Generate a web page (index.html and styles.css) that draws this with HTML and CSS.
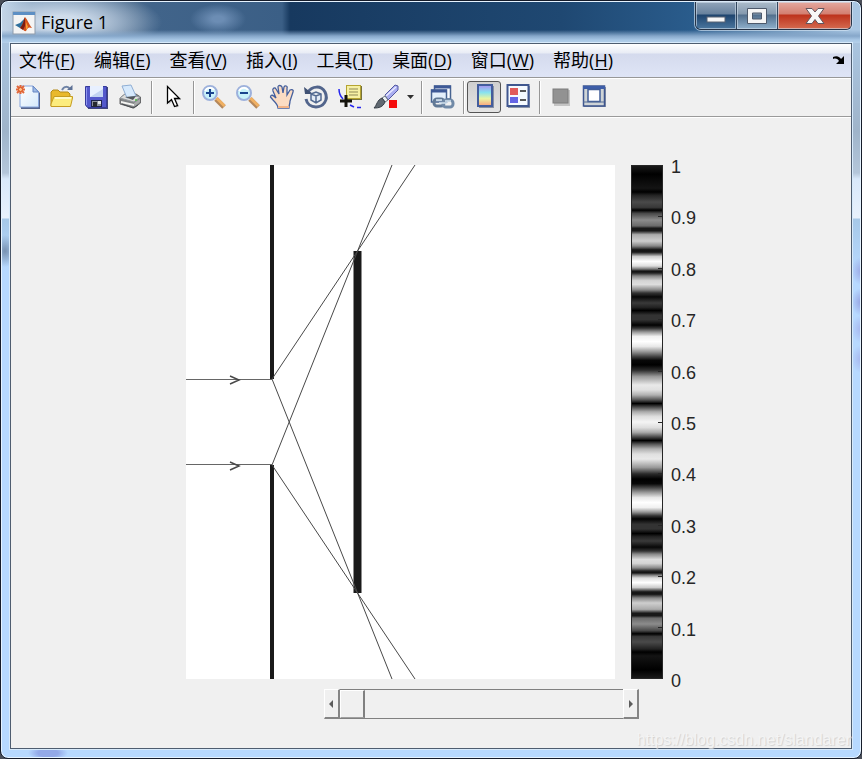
FILE: index.html
```html
<!DOCTYPE html>
<html lang="zh-CN">
<head>
<meta charset="utf-8">
<title>Figure 1</title>
<link rel="stylesheet" href="styles.css">
</head>
<body>
<main class="window">
  <header class="titlebar">
    <svg class="app-icon" viewBox="0 0 24 24" aria-hidden="true">
      <rect x="1" y="1" width="22" height="22" fill="#f4f4f4" stroke="#8e9bab"/>
      <rect x="1" y="1" width="22" height="3" fill="#5d8fc4"/>
      <path d="M3 14 8 12 13 7 12 14 8 17Z" fill="#2f6f9c"/>
      <path d="M13 6C15 8 17 13 20 17 17 16 16 16 14 20 12 21 11 17 8 17 11 14 12 8 13 6Z" fill="#d5521c"/>
      <path d="M8 17C11 14 12 9 13 6L13 15 11 19Z" fill="#7c1d12"/>
      <path d="M14 11 16 16 14 19Z" fill="#f6a034"/>
    </svg>
    <h1 class="title">Figure 1</h1>
    <div class="controls">
      <button class="control minimize" aria-label="最小化"><svg viewBox="0 0 20 18"><rect x="1" y="10" width="18" height="5" fill="#f7f7f7" stroke="#596273"/></svg></button>
      <button class="control maximize" aria-label="最大化"><svg viewBox="0 0 20 18"><path d="M.5 1.500H19.500V16.500H.5ZM5.500 6V12H14.500V6Z" fill="#f5f5f5" fill-rule="evenodd" stroke="#4d596b"/></svg></button>
      <button class="control close" aria-label="关闭"><svg viewBox="0 0 20 18"><path d="M1 1.500H7L10 5 13 1.500H19L13.500 9 19 16.500H13L10 12.500 7 16.500H1L6.500 9Z" fill="#f8f8f8" stroke="#62555c"/></svg></button>
    </div>
  </header>

  <section class="client">
    <nav class="menubar">
      <button class="menu">文件(<u>F</u>)</button>
      <button class="menu">编辑(<u>E</u>)</button>
      <button class="menu">查看(<u>V</u>)</button>
      <button class="menu">插入(<u>I</u>)</button>
      <button class="menu">工具(<u>T</u>)</button>
      <button class="menu">桌面(<u>D</u>)</button>
      <button class="menu">窗口(<u>W</u>)</button>
      <button class="menu">帮助(<u>H</u>)</button>
      <button class="dock" aria-label="停靠"><svg viewBox="0 0 12 10"><path d="M0 2C4 0 7 2 8 4L11 1V9H3L6 6C5 4 3 3 0 4Z" fill="#000"/></svg></button>
    </nav>

    <div class="toolbar">
      <button class="tool" aria-label="新建">
        <svg viewBox="0 0 24 24">
          <defs><linearGradient id="page" x1="0" y1="0" x2="1" y2="1"><stop offset="0" stop-color="#fff"/><stop offset="1" stop-color="#d5e9fb"/></linearGradient></defs>
          <path d="M5 2H18L24 8V24H5Z" fill="#56658c"/>
          <path d="M4 1H17L22.500 6.500V22H4Z" fill="url(#page)" stroke="#86a5dd"/>
          <path d="M17 1V7H22.500Z" fill="#9fbbe6" stroke="#6787c4"/>
          <path d="M4.500 0V9M0 4.500H9M1 1 8 8M8 1 1 8" stroke="#e2673a" stroke-width="2"/>
          <circle cx="4.500" cy="4.500" r="2" fill="#ffc28a" stroke="#dd5825"/>
        </svg>
      </button>
      <button class="tool" aria-label="打开">
        <svg viewBox="0 0 24 24">
          <path d="M1 21V7L3 5H8L10 7H18L20 9V21Z" fill="#e9b92c" stroke="#b48b19"/>
          <path d="M12 5C14 1 18 1 20 4" fill="none" stroke="#6f83a5" stroke-width="2"/>
          <path d="M17 5H22.500V0Z" fill="#5d7195"/>
          <path d="M1 21.500V19L4 11.500H22.500V13L20.500 21.500Z" fill="#fcec7d" stroke="#c69c20"/>
          <path d="M5 13H21" stroke="#fffac6" stroke-width="2"/>
        </svg>
      </button>
      <button class="tool" aria-label="保存">
        <svg viewBox="0 0 24 24">
          <path d="M3 2H24V24H4Z" fill="#41457c"/>
          <path d="M1.500 1.500H22.500V22.500H3.500L1.500 20Z" fill="#5358cb" stroke="#373c9c"/>
          <path d="M2.500 2.500V20" stroke="#9196f0"/>
          <rect x="6" y="1" width="13" height="11" fill="#e8f0ff"/>
          <path d="M6 12 19 4V12Z" fill="#c2d3f2"/>
          <rect x="7" y="15" width="11" height="7" fill="#20244d"/>
          <rect x="8" y="16" width="9" height="5" fill="#8d919c"/>
          <rect x="9" y="17" width="4" height="5" fill="#27282f"/>
          <rect x="14" y="16" width="3" height="3" fill="#e4e6ea"/>
        </svg>
      </button>
      <button class="tool" aria-label="打印">
        <svg viewBox="0 0 24 24">
          <path d="M2 13 7 9H18L22.500 12V18L16 23 2 19Z" fill="#808385" stroke="#68696b"/>
          <path d="M2 13 7 9 22 12 16 17Z" fill="#dcdcda" stroke="#94999e"/>
          <path d="M4 1 13 0 18 11 9 13Z" fill="#d6e9fc" stroke="#8faed4"/>
          <path d="M7 12 18 11 15 15Z" fill="#53585d"/>
          <path d="M3 16 16 19V21L3 18Z" fill="#f4f4f2"/>
          <path d="M16 18 22 14V17L16 22Z" fill="#a8aaaa"/>
          <path d="M4 19 15 23 20 20" fill="none" stroke="#494c50"/>
          <circle cx="18" cy="15" r="1" fill="#4fc244"/>
        </svg>
      </button>
      <span class="divider"></span>
      <button class="tool" aria-label="编辑绘图">
        <svg viewBox="0 0 24 24"><path d="M9 2.500V19L13 15.500 16 22.500 19 21.500 16 14.500H21Z" fill="#8a8a8a" opacity=".45"/><path d="M7.500 1.500V18L11.500 14.500 14.500 21.500 17.500 20.500 14.500 13.500H19.500Z" fill="#fff" stroke="#000" stroke-width="1.300"/></svg>
      </button>
      <span class="divider"></span>
      <button class="tool" aria-label="放大">
        <svg viewBox="0 0 24 24"><path d="M14 14 22 22" stroke="#b5875a" stroke-width="5"/><path d="M14.500 13 22.500 21" stroke="#f0b062" stroke-width="3"/><circle cx="8" cy="8" r="7" fill="#c8f2fa" stroke="#9db1dc" stroke-width="2"/><path d="M3 6C5 2 10 2 12 5" fill="none" stroke="#fff" stroke-width="2"/><path d="M8 4V12M4 8H12" stroke="#19448e" stroke-width="2"/></svg>
      </button>
      <button class="tool" aria-label="缩小">
        <svg viewBox="0 0 24 24"><path d="M14 14 22 22" stroke="#b5875a" stroke-width="5"/><path d="M14.500 13 22.500 21" stroke="#f0b062" stroke-width="3"/><circle cx="8" cy="8" r="7" fill="#c8f2fa" stroke="#9db1dc" stroke-width="2"/><path d="M3 6C5 2 10 2 12 5" fill="none" stroke="#fff" stroke-width="2"/><path d="M4 8H12" stroke="#19448e" stroke-width="2"/></svg>
      </button>
      <button class="tool" aria-label="平移">
        <svg viewBox="0 0 24 24"><path d="M8 23C8 20 6 18 3 15L0.500 12C1 9 3 10 6 13L3 6C2 3 5 2 6 4L9 9 8 2C8 0 11 0 12 2L13 8 14 2C15 0 18 1 17 3L17 10 20 5C22 4 24 5 23 7L20 16C20 19 19 20 19 23Z" fill="#fbdcc3" stroke="#445f9d" stroke-width="1.300"/><path d="M8 22H19" stroke="#f2b488" stroke-width="2"/></svg>
      </button>
      <button class="tool" aria-label="三维旋转">
        <svg viewBox="0 0 24 24"><path d="M4 7C8 1 17 0 21 7 25 15 19 22 12 22 7 22 3 19 2 14" fill="none" stroke="#52658c" stroke-width="3"/><path d="M0 2 9 9H1Z" fill="#405173"/><path d="M7 9 12 7 17 9V15L12 18 7 15ZM7 9 12 11 17 9M12 11V18" fill="#e4ecf6" stroke="#536a91" stroke-width="1.500"/></svg>
      </button>
      <button class="tool" aria-label="数据游标">
        <svg viewBox="0 0 24 24"><rect x="9" y="1" width="15" height="14" fill="#77723b"/><rect x="8.500" y="0.500" width="14" height="13" fill="#f6f0a2" stroke="#b5a431"/><path d="M11 4H20M11 7H20M11 10H20" stroke="#8f8956"/><path d="M1 4Q1 10 5 14M12 20 16 22M19 22.500H23" fill="none" stroke="#2525ef" stroke-width="1.500"/><path d="M8 10V22M2 16H14" stroke="#15130c" stroke-width="3"/></svg>
      </button>
      <button class="tool" aria-label="刷亮">
        <svg viewBox="0 0 24 24"><path d="M13 10 23 0 26 1V5L16 15Z" fill="#a8acf0" stroke="#5459a1"/><path d="M14 11 24 2" stroke="#e8eaff" stroke-width="1.500"/><path d="M10 13 13 11 16 15 13 17Z" fill="#edf2f4" stroke="#68747e"/><path d="M10 13 13 17C11 22 7 23 2 23 5 20 5 15 10 13Z" fill="#606871" stroke="#373f48"/><rect x="17" y="15" width="8" height="8" fill="#f50c0c"/></svg>
      </button>
      <button class="arrow" aria-label="刷亮选项"><svg viewBox="0 0 8 4"><path d="M0 0H7L3.500 4Z" fill="#303030"/></svg></button>
      <span class="divider"></span>
      <button class="tool" aria-label="链接绘图">
        <svg viewBox="0 0 24 24"><rect x="4.500" y="1" width="16" height="13" fill="#f8fbff" stroke="#486491" stroke-width="1.500"/><path d="M4 2H21" stroke="#3e5996" stroke-width="3"/><rect x="1.500" y="5" width="15" height="12" fill="#e3effb" stroke="#486491" stroke-width="1.500"/><path d="M1 6H17" stroke="#3e5996" stroke-width="3"/><rect x="4" y="14" width="10" height="7" rx="3" fill="none" stroke="#617996" stroke-width="3"/><rect x="13" y="15" width="10" height="7" rx="3" fill="none" stroke="#718aa7" stroke-width="3"/><path d="M6 15H12M15 16H21M9 18H17" stroke="#d4e4ef" stroke-width="1.500"/></svg>
      </button>
      <span class="divider"></span>
      <button class="tool pressed" aria-label="插入颜色栏" aria-pressed="true">
        <svg viewBox="0 0 24 24"><defs><linearGradient id="spectrum" x1="0" y1="0" x2="0" y2="1"><stop stop-color="#a98df0"/><stop offset=".35" stop-color="#86e2f0"/><stop offset=".65" stop-color="#eaf5a2"/><stop offset="1" stop-color="#fba17d"/></linearGradient></defs><rect x="7" y="1" width="15" height="22" fill="#8790a3"/><rect x="6" y="0" width="14" height="21" fill="url(#spectrum)" stroke="#435d9d" stroke-width="2"/></svg>
      </button>
      <button class="tool" aria-label="插入图例">
        <svg viewBox="0 0 24 24"><rect x="2" y="1" width="22" height="22" fill="#8d96a9"/><rect x="1.500" y="0" width="21" height="21" fill="#f5faff" stroke="#40578f" stroke-width="2"/><rect x="4" y="3" width="8" height="7" fill="#e15b5b"/><rect x="4" y="12" width="8" height="6" fill="#6464e5"/><path d="M14 6H20M14 15H20" stroke="#222" stroke-width="1.500"/></svg>
      </button>
      <span class="divider"></span>
      <button class="tool" aria-label="隐藏绘图工具" disabled>
        <svg viewBox="0 0 24 24"><rect x="6" y="5" width="16" height="16" fill="#c4c4c4"/><rect x="5" y="4" width="15" height="14" fill="#929292" stroke="#7d7d7d"/></svg>
      </button>
      <button class="tool" aria-label="显示绘图工具">
        <svg viewBox="0 0 24 24"><rect x="2" y="2" width="22" height="20" fill="#8992a5"/><rect x="1.500" y="1" width="21" height="20" fill="#cfd4d6" stroke="#3d558e" stroke-width="1.500"/><path d="M1 2.500H23" stroke="#3d5da8" stroke-width="3"/><rect x="6" y="4.500" width="12" height="12" fill="#fff" stroke="#405c98" stroke-width="1.500"/><path d="M1 17H22" stroke="#536a96"/></svg>
      </button>
    </div>

    <div class="figure">
      <svg class="axes" viewBox="0 0 429 514" preserveAspectRatio="none" role="img" aria-label="双缝衍射光路">
        <rect width="429" height="514" fill="#fff"/>
        <path d="M86 0V214M86 300V514" stroke="#1a1a1a" stroke-width="4"/>
        <path d="M171.500 86V428" stroke="#1a1a1a" stroke-width="8"/>
        <g fill="none" stroke="#484848" stroke-width="1">
          <path d="M0 214.500H86M0 299.500H86" stroke="#666"/>
          <path d="M86 214 229 0M86 300 206 0M86 214 206 514M86 300 229 514"/>
          <path d="M44 211 53 215 44 219M44 297 53 301 44 305" stroke-width="1.500"/>
        </g>
      </svg>
      <svg class="colorbar" viewBox="0 0 32 514" preserveAspectRatio="none" aria-hidden="true">
        <defs>
          <linearGradient id="fringes" gradientUnits="userSpaceOnUse" x1="0" y1="0" x2="0" y2="257" spreadMethod="reflect">
            <stop offset="0" stop-color="#1c1c1c"/><stop offset=".035" stop-color="#000"/><stop offset=".09" stop-color="#141414"/><stop offset=".105" stop-color="#000"/>
            <stop offset=".117" stop-color="#222"/><stop offset=".144" stop-color="#4a4a4a"/><stop offset=".165" stop-color="#383838"/><stop offset=".176" stop-color="#000"/>
            <stop offset=".188" stop-color="#484848"/><stop offset=".214" stop-color="#8c8c8c"/><stop offset=".237" stop-color="#6a6a6a"/><stop offset=".246" stop-color="#181818"/><stop offset=".256" stop-color="#181818"/>
            <stop offset=".271" stop-color="#aaa"/><stop offset=".296" stop-color="#cecece"/><stop offset=".315" stop-color="#888"/><stop offset=".33" stop-color="#141414"/><stop offset=".339" stop-color="#181818"/>
            <stop offset=".356" stop-color="#ccc"/><stop offset=".375" stop-color="#fff"/><stop offset=".393" stop-color="#ddd"/><stop offset=".405" stop-color="#777"/><stop offset=".413" stop-color="#111"/><stop offset=".42" stop-color="#222"/>
            <stop offset=".432" stop-color="#888"/><stop offset=".45" stop-color="#d4d4d4"/><stop offset=".465" stop-color="#ddd"/><stop offset=".486" stop-color="#888"/><stop offset=".498" stop-color="#333"/><stop offset=".513" stop-color="#080808"/>
            <stop offset=".537" stop-color="#3a3a3a"/><stop offset=".554" stop-color="#222"/><stop offset=".566" stop-color="#000"/><stop offset=".584" stop-color="#333"/><stop offset=".602" stop-color="#333"/><stop offset=".623" stop-color="#020202"/>
            <stop offset=".635" stop-color="#333"/><stop offset=".65" stop-color="#999"/><stop offset=".667" stop-color="#f0f0f0"/><stop offset=".687" stop-color="#fff"/><stop offset=".706" stop-color="#e8e8e8"/><stop offset=".726" stop-color="#999"/>
            <stop offset=".745" stop-color="#444"/><stop offset=".76" stop-color="#080808"/><stop offset=".778" stop-color="#000"/><stop offset=".798" stop-color="#2a2a2a"/><stop offset=".823" stop-color="#999"/><stop offset=".856" stop-color="#e9e9e9"/>
            <stop offset=".875" stop-color="#e0e0e0"/><stop offset=".895" stop-color="#b0b0b0"/><stop offset=".914" stop-color="#555"/><stop offset=".928" stop-color="#000"/><stop offset=".944" stop-color="#555"/><stop offset=".96" stop-color="#aaa"/><stop offset=".978" stop-color="#ddd"/><stop offset="1" stop-color="#f4f4f4"/>
          </linearGradient>
        </defs>
        <rect x=".5" y=".5" width="31" height="513" fill="url(#fringes)" stroke="#262626"/>
        <path d="M27 51.500h4M27 103.500h4M27 154.500h4M27 206.500h4M27 257.500h4M27 308.500h4M27 360.500h4M27 411.500h4M27 462.500h4" stroke="#262626"/>
      </svg>
      <ol class="ticks">
        <li>1</li><li>0.9</li><li>0.8</li><li>0.7</li><li>0.6</li><li>0.5</li><li>0.4</li><li>0.3</li><li>0.2</li><li>0.1</li><li>0</li>
      </ol>
      <div class="slider">
        <button class="step" aria-label="减小"><svg viewBox="0 0 4 8"><path d="M4 0V8L0 4Z" fill="#5c5c5c"/></svg></button>
        <input class="range" type="range" min="0" max="100" value="0" aria-label="距离">
        <button class="step" aria-label="增大"><svg viewBox="0 0 4 8"><path d="M0 0V8L4 4Z" fill="#5c5c5c"/></svg></button>
      </div>
      <span class="watermark">https://blog.csdn.net/slandarer</span>
    </div>
  </section>
</main>
</body>
</html>
```
FILE: styles.css
```css
* {
  box-sizing: border-box;
}

body {
  margin: 0;
  background: #4a4e58;
  font-family: "Open Sans", "Noto Sans CJK SC", sans-serif;
}

button {
  margin: 0;
  padding: 0;
  border: 0;
  background: none;
  color: #000;
  font: inherit;
}

svg {
  display: block;
  overflow: visible;
}

.window {
  display: flex;
  flex-direction: column;
  min-height: 100vh;
  padding: 0 8px 8px;
  border: 1px solid #161c2a;
  border-radius: 8px;
  box-shadow: inset 0 0 0 1px #e6f3ff;
  background:
    radial-gradient(ellipse 20px 8px at 47px calc(100% - 5px), #93a9e8 50%, transparent),
    radial-gradient(ellipse 10px 14px at 100% 270px, #9ba9e5, transparent),
    radial-gradient(ellipse 10px 14px at 100% 301px, #96a3e2, transparent),
    radial-gradient(ellipse 10px 14px at 100% 328px, #a6b6ee, transparent),
    radial-gradient(ellipse 10px 14px at 100% 358px, #a6b6ee, transparent),
    radial-gradient(ellipse 12px 16px at 4px 250px, #7892b2, transparent),
    linear-gradient(#a9c4df 44px, #9fb4ca 130px, #b4c6da 172px, #d8e8fa 178px, #e8f1fc 217px, #a6c8e8 218px, #b7d9ff 270px);
}

/* Title bar */
.titlebar {
  display: flex;
  align-items: flex-start;
  height: 41px;
  margin: 1px -7px 0;
  padding-left: 9px;
  border-radius: 6px 6px 0 0;
  background:
    linear-gradient(transparent 28px, #86a7ca 34px, #a9c8e6 38px, #b5d0ea),
    radial-gradient(ellipse 100px 32px at 60px 20px, #cfdceb 20%, #c0d0e2aa 55%, transparent),
    radial-gradient(ellipse 28px 15px at 216px 17px, #6c8db4 20%, transparent),
    linear-gradient(90deg, #c7daee 0, #7f9dbc 30px, #4d6d8f 130px, #41648a 150px, #3b5f86 280px, #17395f 288px, #1f4872 560px, #2a5c8c 690px, #a9c6e2 850px);
}

.app-icon {
  width: 24px;
  height: 24px;
  margin: 9px 5px 0 1px;
}

.title {
  flex: 1;
  margin: 8px 0 0;
  font-size: 18px;
  font-weight: 400;
  line-height: 24px;
}

.controls {
  display: flex;
  margin-right: 8px;
  border: 1px solid #273447;
  border-top: 0;
  border-radius: 0 0 6px 6px;
  overflow: hidden;
  box-shadow: 0 0 0 1px #d4e4f3aa;
}

.control {
  display: grid;
  place-items: center;
  width: 41px;
  height: 27px;
  border-right: 1px solid #31465e;
  box-shadow: inset 0 0 0 1px #d2dfec99;
  background: linear-gradient(#91a5ba, #67819d 12px, #1e446e 13px, #4b779f);
}

.maximize {
  background: linear-gradient(#acbccb, #8499ae 12px, #526f8d 13px, #8fb0cc);
}

.close {
  width: 73px;
  border-right: 0;
  background: linear-gradient(#e4aaa0, #d37e70 12px, #bd321c 13px, #d56b50);
}

.control svg {
  width: 20px;
  height: 18px;
}

/* Client area */
.client {
  display: flex;
  flex: 1;
  flex-direction: column;
  margin: 0 1px 1px;
  border: 1px solid #4e5d70;
  outline: 1px solid #d7eafb;
  background: #f0f0f0;
}

.menubar {
  display: flex;
  align-items: center;
  gap: 19px;
  height: 34px;
  padding: 0 6px 2px 8px;
  border-bottom: 1px solid #989898;
  background: linear-gradient(#fff, #e8ecf5 9px, #d4daed 10px, #dfe5f6);
}

.menu {
  font-size: 18px;
  line-height: 24px;
  white-space: nowrap;
}

.menu u {
  text-decoration-thickness: 1px;
  text-underline-offset: 2px;
}

.dock {
  margin-left: auto;
}

.dock svg {
  width: 12px;
  height: 10px;
}

.toolbar {
  display: flex;
  align-items: center;
  height: 39px;
  border-bottom: 1px solid #9a9a9a;
  box-shadow: inset 0 1px #fff, 0 1px #fff;
}

.tool {
  display: grid;
  place-items: center;
  width: 34px;
  height: 32px;
}

.tool svg {
  width: 24px;
  height: 24px;
}

.pressed {
  border: 1px solid #555;
  border-radius: 3px;
  background: linear-gradient(#cfcfcf, #e4e4e4);
}

.arrow {
  display: grid;
  place-items: center;
  width: 16px;
  height: 32px;
  padding-left: 4px;
}

.arrow svg {
  width: 8px;
  height: 4px;
}

.divider {
  width: 8px;
  height: 33px;
  background: linear-gradient(90deg, transparent 4px, #969696 4px, #969696 5px, #fff 5px, #fff 6px, transparent 6px);
}

/* Plot, colour scale and slider */
.figure {
  display: grid;
  flex: 1;
  grid-template-columns: 175fr 429fr 16fr 32fr 188fr;
  grid-template-rows: 48fr 514fr 10px 30px 29px;
}

.axes {
  grid-area: 2 / 2;
  width: 100%;
  height: 100%;
  overflow: hidden;
}

.colorbar {
  grid-area: 2 / 4;
  width: 100%;
  height: 100%;
}

.ticks {
  display: flex;
  grid-area: 2 / 5;
  flex-direction: column;
  justify-content: space-between;
  margin: -8px 0 -12px 8px;
  padding: 0;
  color: #262626;
  font: 18px/20px "Liberation Sans", sans-serif;
  list-style: none;
}

.slider {
  display: grid;
  grid-area: 4 / 1 / 5 / 6;
  grid-template-columns: 16px 1fr 16px;
  margin: 0 25%  0 37%;
  padding: 0 2px;
}

.step {
  display: grid;
  place-items: center;
  border: solid;
  border-width: 1px 2px 2px 1px;
  border-color: #fff #858585 #858585 #fff;
}

.step svg {
  width: 4px;
  height: 8px;
}

.range {
  width: 100%;
  min-width: 0;
  height: 30px;
  margin: 0;
  border: solid #808080;
  border-width: 1px 0;
  background: #f0f0f0;
  appearance: none;
}

.range::-webkit-slider-thumb {
  width: 25px;
  height: 28px;
  border: solid;
  border-width: 1px 2px 1px 1px;
  border-color: #fff #808080 #a0a0a0 #fff;
  background: #f0f0f0;
  appearance: none;
}

.watermark {
  grid-area: 5 / 1 / 6 / 6;
  align-self: end;
  justify-self: end;
  color: #f4f4f4;
  font: 16px/16px "Liberation Sans", sans-serif;
  text-shadow: 1px 1px 1px #d0d0d0;
}
```
